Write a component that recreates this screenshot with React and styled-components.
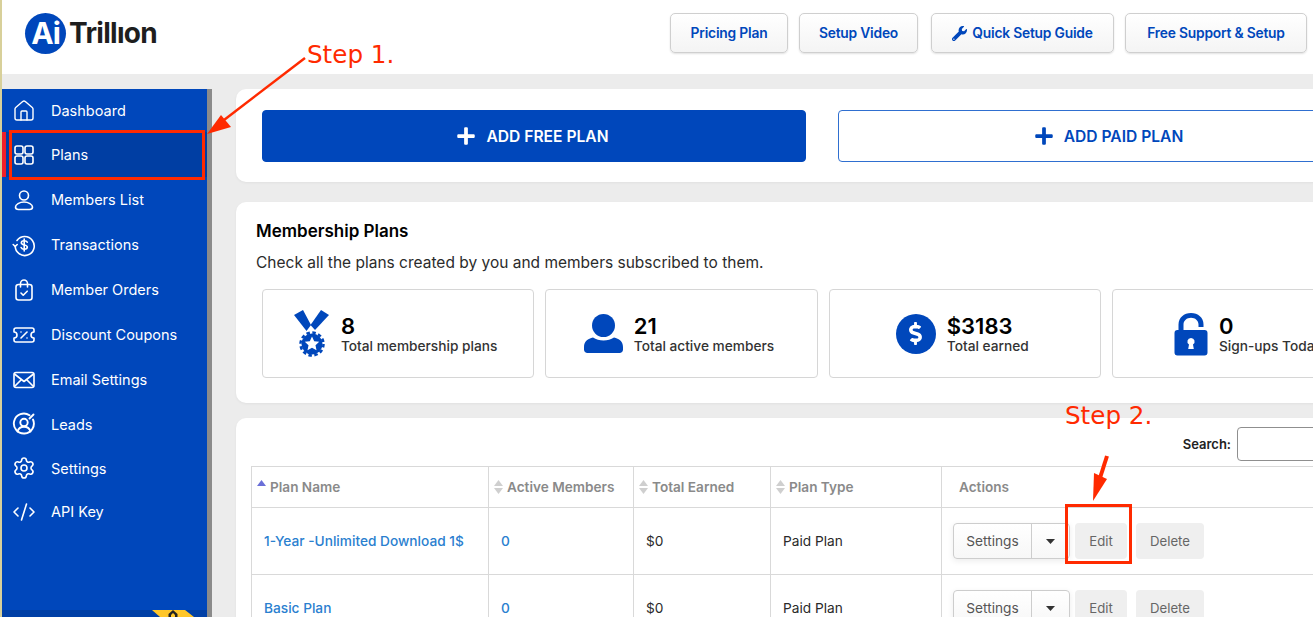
import React from 'react'
import styled, { createGlobalStyle } from 'styled-components'
import {
  House,
  TicketPercent,
  Settings as SettingsIcon,
  CodeXml
} from 'lucide-react'
import { FaPlus, FaWrench, FaDollarSign } from 'react-icons/fa'

const GlobalStyle = createGlobalStyle`
  html, body {
    margin: 0;
    padding: 0;
    height: 617px;
    overflow: hidden;
    background: #efefef;
    font-family: Inter, "Liberation Sans", sans-serif;
  }
  * {
    box-sizing: border-box;
  }
`

const Page = styled.div`
  position: relative;
  width: 1313px;
  height: 617px;
  overflow: hidden;
  border-left: 2px solid #d8d09a;
`

const Header = styled.header`
  display: flex;
  align-items: center;
  justify-content: space-between;
  height: 74px;
  padding: 0 6px 8px 23px;
  background: #fff;
`

const Logo = styled.div`
  display: flex;
  align-items: center;
  gap: 3px;
`

const LogoBadge = styled.div`
  display: flex;
  align-items: center;
  justify-content: center;
  width: 41px;
  height: 41px;
  border-radius: 50%;
  background: #0047bb;
  color: #fff;
  font-size: 30px;
  font-weight: 700;
  letter-spacing: -1px;
`

const LogoName = styled.div`
  color: #1e1e1e;
  font-size: 28px;
  font-weight: 700;
  letter-spacing: -0.7px;
`

const HeaderNav = styled.nav`
  display: flex;
  align-items: center;
  gap: 11px;
`

const NavButton = styled.button`
  display: flex;
  align-items: center;
  justify-content: center;
  gap: 5px;
  width: ${p => p.$width}px;
  height: 40px;
  margin-left: ${p => p.$shift || 0}px;
  padding: 0;
  border: 1px solid #cfcfcf;
  border-radius: 5px;
  background: linear-gradient(#fff, #f4f4f4);
  box-shadow: 0 1px 2px rgba(0, 0, 0, 0.12);
  color: #0047bb;
  font-family: Inter, sans-serif;
  font-size: 13.8px;
  font-weight: 600;
  letter-spacing: -0.2px;

  svg {
    font-size: 15px;
  }
`

const Body = styled.div`
  display: flex;
  height: 543px;
  padding-top: 15px;
  background: #ececec;
`

const Sidebar = styled.aside`
  display: flex;
  flex: none;
  flex-direction: column;
  width: 210px;
  border-right: 5px solid #8b8b8b;
  background: #0047bb;
`

const SideItem = styled.a`
  position: relative;
  display: flex;
  align-items: center;
  gap: 15px;
  height: ${p => p.$height || 45}px;
  padding-left: 10px;
  background: ${p => (p.$active ? '#003ea3' : 'transparent')};
  color: #fff;
  font-size: 14.5px;
  font-weight: 400;

  svg {
    flex: none;
    width: 24px;
    height: 24px;
  }

  &::before {
    content: '';
    display: ${p => (p.$active ? 'block' : 'none')};
    position: absolute;
    left: 0;
    top: 0;
    bottom: 0;
    width: 4px;
    background: #f0202a;
  }
`

const SideFooter = styled.div`
  display: flex;
  justify-content: flex-end;
  align-items: flex-start;
  height: 7px;
  margin-top: auto;
  padding-right: 13px;
  background: #003fa6;
  overflow: hidden;

  svg {
    flex: none;
  }
`

const Main = styled.main`
  display: flex;
  flex: 1;
  flex-direction: column;
  min-width: 0;
  padding-left: 24px;
  overflow: hidden;
`

const Card = styled.section`
  flex: none;
  width: 1200px;
  margin-bottom: ${p => p.$gap || 0}px;
  border-radius: 10px;
  background: #fff;
  box-shadow: 0 1px 3px rgba(0, 0, 0, 0.05);
`

const AddRow = styled(Card)`
  display: flex;
  gap: 32px;
  padding: 21px 26px 20px;
`

const AddButton = styled.button`
  display: flex;
  align-items: center;
  justify-content: center;
  gap: 10px;
  width: 544px;
  height: 52px;
  padding: 0 3px 0 0;
  border: 1px solid ${p => (p.$outline ? '#2f6fd0' : '#0047bb')};
  border-radius: 4px;
  background: ${p => (p.$outline ? '#fff' : '#0047bb')};
  color: ${p => (p.$outline ? '#0047bb' : '#fff')};
  font-family: Inter, sans-serif;
  font-size: 15.6px;
  font-weight: 600;

  svg {
    font-size: 20px;
  }
`

const PlansCard = styled(Card)`
  padding: 17px 20px 25px;
`

const Title = styled.h2`
  margin: 0;
  color: #000;
  font-size: 17px;
  font-weight: 600;
  line-height: 24px;
`

const Subtitle = styled.p`
  margin: 9px 0 0;
  color: #2b2b2b;
  font-size: 15.5px;
  line-height: 22px;
`

const Stats = styled.div`
  display: flex;
  gap: 11px;
  margin: 15px 0 0 6px;
`

const Stat = styled.div`
  display: flex;
  flex: none;
  align-items: center;
  justify-content: center;
  gap: 11px;
  width: 272.3px;
  height: 89px;
  padding-right: ${p => (p.$centered ? 0 : 5)}px;
  border: 1px solid #d6d6d6;
  border-radius: 4px;
`

const StatIcon = styled.div`
  display: flex;
  align-items: center;
  justify-content: center;
  color: #0047bb;
`

const DollarIcon = styled.div`
  display: flex;
  align-items: center;
  justify-content: center;
  width: 40px;
  height: 40px;
  border-radius: 50%;
  background: #0047bb;
  color: #fff;
  font-size: 23px;
`

const StatText = styled.div`
  padding-top: 1px;
`

const StatValue = styled.div`
  color: #000;
  font-size: 22px;
  font-weight: 600;
  line-height: 24px;
`

const StatLabel = styled.div`
  color: #333;
  font-size: 13.7px;
  font-weight: 500;
  line-height: 17px;
`

const TableCard = styled(Card)`
  padding: 9px 15px 0;
  height: 300px;
`

const SearchRow = styled.div`
  display: flex;
  align-items: center;
  justify-content: flex-end;
  gap: 6px;
  margin-bottom: 5px;
  color: #222;
  font-size: 13px;
  font-weight: 600;
`

const SearchInput = styled.input`
  width: 184px;
  height: 34px;
  border: 1px solid #8f8f8f;
  border-radius: 4px;
  background: #fff;
`

const Table = styled.table`
  width: 1170px;
  border-collapse: collapse;
  table-layout: fixed;
  font-size: 13.7px;
`

const Th = styled.th`
  width: ${p => (p.$width ? `${p.$width}px` : 'auto')};
  height: 41px;
  padding: 0 0 0 ${p => p.$pad || 5}px;
  border: 1px solid #d9d9d9;
  color: #8a8a8a;
  font-size: 13.6px;
  font-weight: 600;
  text-align: left;
  white-space: nowrap;
`

const SortWrap = styled.span`
  display: flex;
  align-items: center;
  gap: 4px;
`

const Td = styled.td`
  height: 67px;
  padding: 0 0 0 ${p => p.$pad || 12}px;
  border: 1px solid #d9d9d9;
  color: ${p => (p.$link ? '#2a80cf' : '#2a2a2a')};
  font-weight: ${p => (p.$link ? 500 : 400)};
  white-space: nowrap;
`

const Actions = styled.div`
  display: flex;
  align-items: center;
`

const SplitButton = styled.div`
  display: flex;
  width: 117px;
  height: 36px;
  border: 1px solid #cdcdcd;
  border-radius: 4px;
  background: linear-gradient(#fff, #f7f7f7);
  box-shadow: 0 2px 6px rgba(0, 0, 0, 0.08);
  color: #555;
`

const SplitLabel = styled.span`
  display: flex;
  align-items: center;
  justify-content: center;
  width: 78px;
  border-right: 1px solid #cdcdcd;
`

const SplitCaret = styled.span`
  display: flex;
  flex: 1;
  align-items: center;
  justify-content: center;
`

const GreyButton = styled.button`
  width: ${p => p.$width}px;
  height: 36px;
  margin-left: ${p => p.$left}px;
  padding: 0;
  border: 0;
  border-radius: 4px;
  background: #efefef;
  color: #666;
  font-family: Inter, sans-serif;
  font-size: 13.2px;
`

const Overlay = styled.svg`
  position: absolute;
  left: -2px;
  top: 0;
  width: 1313px;
  height: 617px;
  pointer-events: none;
`

const StepLabel = styled.span`
  position: absolute;
  color: #ff2a00;
  font-family: "DejaVu Sans", sans-serif;
  font-size: 24.6px;
  line-height: 30px;
  white-space: nowrap;
`

const StepOne = styled(StepLabel)`
  left: 305px;
  top: 40px;
`

const StepTwo = styled(StepLabel)`
  left: 1063px;
  top: 401px;
`

const GridIcon = () => (
  <svg viewBox="0 0 24 24" fill="none" stroke="currentColor" strokeWidth="1.6">
    <rect x="3" y="3" width="8" height="8" rx="2" />
    <rect x="13" y="3" width="8" height="8" rx="2" />
    <rect x="3" y="13" width="8" height="8" rx="2" />
    <rect x="13" y="13" width="8" height="8" rx="2" />
  </svg>
)

const MemberIcon = () => (
  <svg viewBox="0 0 24 24" fill="none" stroke="currentColor" strokeWidth="1.6">
    <circle cx="12" cy="7.500" r="4.500" />
    <path d="M12 14c-4.500 0-8.500 2.500-8.500 5 0 1.500 1.200 2.500 3 2.500h11c1.800 0 3-1 3-2.500 0-2.500-4-5-8.500-5z" />
  </svg>
)

const TransactionsIcon = () => (
  <svg viewBox="0 0 24 24" fill="none" stroke="currentColor" strokeWidth="1.6" strokeLinecap="round" strokeLinejoin="round">
    <path d="M5 7.500A9.500 9.500 0 1 1 3.200 13" />
    <path d="M1.200 11.500l2 2 2-2" />
    <path d="M15.200 9.200c-.5-1-1.600-1.500-3-1.500-1.700 0-2.900.8-2.900 2.100 0 2.900 6 1.400 6 4.300 0 1.300-1.300 2.100-3 2.100-1.500 0-2.700-.6-3.200-1.700" />
    <path d="M12.200 6v12" />
  </svg>
)

const OrdersIcon = () => (
  <svg viewBox="0 0 24 24" fill="none" stroke="currentColor" strokeWidth="1.6" strokeLinecap="round" strokeLinejoin="round">
    <rect x="4" y="6.500" width="16" height="15.500" rx="2.500" />
    <path d="M8.500 9V5.500a3.500 3.500 0 0 1 7 0V9" />
    <path d="M9 15l2.200 2.200 4-4" />
  </svg>
)

const MailIcon = () => (
  <svg viewBox="0 0 24 24" fill="none" stroke="currentColor" strokeWidth="1.6" strokeLinejoin="round">
    <rect x="2" y="4.500" width="20" height="15" rx="2" />
    <path d="M2.500 6l9.500 7.500L21.500 6" />
    <path d="M2.500 18.500l7-7M21.500 18.500l-7-7" />
  </svg>
)

const LeadsIcon = () => (
  <svg viewBox="0 0 24 24" fill="none" stroke="currentColor" strokeWidth="1.9" strokeLinecap="round" strokeLinejoin="round">
    <path d="M17.500 3.300A10 10 0 1 0 21 7.500" />
    <circle cx="12" cy="10.500" r="3.700" />
    <path d="M5.500 19.500c1-3.200 3.500-4.800 6.500-4.800s5.500 1.600 6.500 4.800" />
    <path d="M17.500 6.500l4-4" />
  </svg>
)

const MedalIcon = () => (
  <svg width="36" height="47" viewBox="0 0 36 47" fill="currentColor">
    <path d="M0 5L9 0 17 15 12.500 21z" />
    <path d="M35 5L27 0 16.500 15 21 20z" />
    <circle cx="18" cy="34" r="10.500" />
    <circle cx="18" cy="34" r="11.500" fill="none" stroke="currentColor" strokeWidth="2.500" strokeDasharray="3.500 2.520" />
    <path d="M18 26.500l2.200 4.700 5 .6-3.700 3.500 1 5-4.500-2.500-4.500 2.500 1-5-3.700-3.500 5-.6z" fill="#fff" />
  </svg>
)

const PersonIcon = () => (
  <svg width="39" height="39" viewBox="0 0 39 39" fill="currentColor">
    <circle cx="19.500" cy="11.500" r="11.500" />
    <path d="M0 33c0-5.500 4-8.500 9-9.500 3 2 6.500 3 10.500 3s7.500-1 10.500-3c5 1 9 4 9 9.500v2.500c0 2-1.500 3.500-3.500 3.500h-32C1.500 39 0 37.500 0 35.500z" />
  </svg>
)

const LockIcon = () => (
  <svg width="34" height="44" viewBox="0 0 34 44" fill="currentColor">
    <path d="M4.500 19v-6.500C4.500 5.500 10 1 17 1s12.500 4.500 12.500 11.500V15h-5v-2.500c0-4-3.300-6.800-7.500-6.800s-7.500 2.800-7.500 6.800V19z" />
    <path
      fillRule="evenodd"
      d="M3.500 18h27A3 3 0 0 1 33.500 21v19.500a3 3 0 0 1-3 3h-27a3 3 0 0 1-3-3V21a3 3 0 0 1 3-3zM17 26a3.600 3.600 0 0 0-2 6.600l-.8 4.400h5.600l-.8-4.400A3.600 3.600 0 0 0 17 26z"
    />
  </svg>
)

const SortIcon = ({ active }) => (
  <svg width="9" height="16" viewBox="0 0 9 16">
    <path d="M4.500 1L9 7H0z" fill={active ? '#6a6fd8' : '#cfcfcf'} />
    {!active && <path d="M4.500 15L0 9h9z" fill="#cfcfcf" />}
  </svg>
)

const Caret = () => (
  <svg width="9" height="5" viewBox="0 0 9 5">
    <path d="M0 0h9L4.500 5z" fill="#333" />
  </svg>
)

const Annotations = () => (
  <Overlay viewBox="0 0 1313 617">
    <g fill="none" stroke="#ff2a00">
      <rect x="10.500" y="131.500" width="193" height="47" strokeWidth="3" />
      <rect x="1066.500" y="505.500" width="64" height="57" strokeWidth="3" />
      <path d="M305 58L224 120" strokeWidth="2.500" />
      <path d="M1107 456L1100 478" strokeWidth="4" />
    </g>
    <path d="M207 134L221 115 231 127z" fill="#ff2a00" />
    <path d="M1093 501L1094 473 1107 479z" fill="#ff2a00" />
  </Overlay>
)

const menu = [
  { label: 'Dashboard', icon: <House strokeWidth={1.4} />, height: 43 },
  { label: 'Plans', icon: <GridIcon />, active: true },
  { label: 'Members List', icon: <MemberIcon /> },
  { label: 'Transactions', icon: <TransactionsIcon /> },
  { label: 'Member Orders', icon: <OrdersIcon /> },
  { label: 'Discount Coupons', icon: <TicketPercent strokeWidth={1.6} /> },
  { label: 'Email Settings', icon: <MailIcon /> },
  { label: 'Leads', icon: <LeadsIcon />, height: 44 },
  { label: 'Settings', icon: <SettingsIcon strokeWidth={1.6} />, height: 44 },
  { label: 'API Key', icon: <CodeXml strokeWidth={1.6} />, height: 43 }
]

const plans = ['1-Year -Unlimited Download 1$', 'Basic Plan']

const App = () => (
  <>
    <GlobalStyle />
    <Page>
      <Header>
        <Logo>
          <LogoBadge>Ai</LogoBadge>
          <LogoName>Trillıon</LogoName>
        </Logo>
        <HeaderNav>
          <NavButton $width={118}>Pricing Plan</NavButton>
          <NavButton $width={119}>Setup Video</NavButton>
          <NavButton $width={183} $shift={2}><FaWrench />Quick Setup Guide</NavButton>
          <NavButton $width={182}>Free Support &amp; Setup</NavButton>
        </HeaderNav>
      </Header>

      <Body>
        <Sidebar>
          {menu.map(item => (
            <SideItem key={item.label} $active={item.active} $height={item.height}>
              {item.icon}
              {item.label}
            </SideItem>
          ))}
          <SideFooter>
            <svg width="42" height="7" viewBox="0 0 42 7">
              <path d="M0 0H33L42 7H8z" fill="#ffc629" />
              <path d="M21 0L25.500 4V7H16.500V4z" fill="#222" />
              <path d="M21 3L23 5V7H19V5z" fill="#ffc629" />
            </svg>
          </SideFooter>
        </Sidebar>

        <Main>
          <AddRow $gap={20}>
            <AddButton><FaPlus />ADD FREE PLAN</AddButton>
            <AddButton $outline><FaPlus />ADD PAID PLAN</AddButton>
          </AddRow>

          <PlansCard $gap={15}>
            <Title>Membership Plans</Title>
            <Subtitle>Check all the plans created by you and members subscribed to them.</Subtitle>
            <Stats>
              <Stat>
                <StatIcon><MedalIcon /></StatIcon>
                <StatText>
                  <StatValue>8</StatValue>
                  <StatLabel>Total membership plans</StatLabel>
                </StatText>
              </Stat>
              <Stat>
                <StatIcon><PersonIcon /></StatIcon>
                <StatText>
                  <StatValue>21</StatValue>
                  <StatLabel>Total active members</StatLabel>
                </StatText>
              </Stat>
              <Stat>
                <DollarIcon><FaDollarSign /></DollarIcon>
                <StatText>
                  <StatValue>$3183</StatValue>
                  <StatLabel>Total earned</StatLabel>
                </StatText>
              </Stat>
              <Stat $centered>
                <StatIcon><LockIcon /></StatIcon>
                <StatText>
                  <StatValue>0</StatValue>
                  <StatLabel>Sign-ups Today</StatLabel>
                </StatText>
              </Stat>
            </Stats>
          </PlansCard>

          <TableCard>
            <SearchRow>
              Search:
              <SearchInput type="text" />
            </SearchRow>
            <Table>
              <thead>
                <tr>
                  <Th $width={237}><SortWrap><SortIcon active />Plan Name</SortWrap></Th>
                  <Th $width={145}><SortWrap><SortIcon />Active Members</SortWrap></Th>
                  <Th $width={137}><SortWrap><SortIcon />Total Earned</SortWrap></Th>
                  <Th $width={171}><SortWrap><SortIcon />Plan Type</SortWrap></Th>
                  <Th $pad={17}>Actions</Th>
                </tr>
              </thead>
              <tbody>
                {plans.map(name => (
                  <tr key={name}>
                    <Td $link>{name}</Td>
                    <Td $link>0</Td>
                    <Td>$0</Td>
                    <Td>Paid Plan</Td>
                    <Td $pad={11}>
                      <Actions>
                        <SplitButton>
                          <SplitLabel>Settings</SplitLabel>
                          <SplitCaret><Caret /></SplitCaret>
                        </SplitButton>
                        <GreyButton $width={52} $left={5}>Edit</GreyButton>
                        <GreyButton $width={68} $left={9}>Delete</GreyButton>
                      </Actions>
                    </Td>
                  </tr>
                ))}
              </tbody>
            </Table>
          </TableCard>
        </Main>
      </Body>

      <StepOne>Step 1.</StepOne>
      <StepTwo>Step 2.</StepTwo>
      <Annotations />
    </Page>
  </>
)

export default App
